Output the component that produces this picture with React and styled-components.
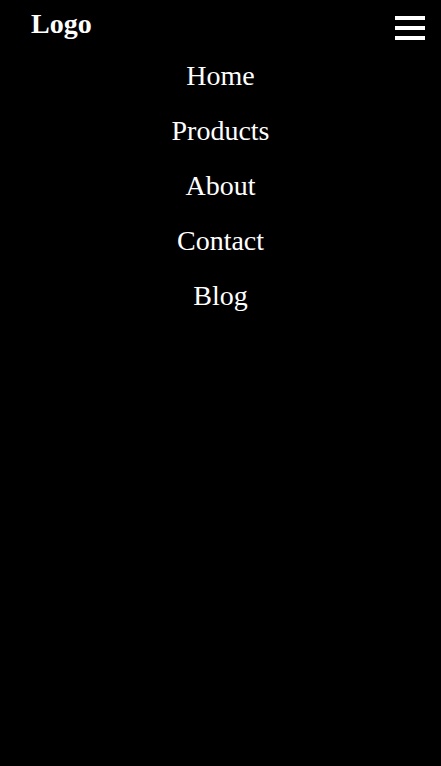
import styled, { createGlobalStyle } from 'styled-components'

const GlobalStyle = createGlobalStyle`
    html, body {
        margin: 0;
        padding: 0;
        background-color: #000;
    }

    body {
        font-family: "Liberation Serif", "Times New Roman", serif;
        color: #fff;
        min-height: 766px;
    }
`

const Page = styled.div`
    background-color: #000;
    min-height: 766px;
`

const HeaderWrap = styled.header`
    align-items: flex-start;
    display: flex;
    justify-content: space-between;
    padding: 8px 16px 0 31px;
`

const Logo = styled.div`
    font-size: 28px;
    font-weight: bold;
    line-height: 31px;
`

const Burger = styled.button`
    background: none;
    border: none;
    cursor: pointer;
    display: flex;
    flex-direction: column;
    gap: 6px;
    margin-top: 8px;
    padding: 0;
    width: 30px;
`

const Bar = styled.span`
    background-color: #fff;
    display: block;
    height: 4px;
    width: 100%;
`

const NavList = styled.nav`
    align-items: center;
    display: flex;
    flex-direction: column;
    margin-top: 8px;
`

const NavLink = styled.a`
    color: #fff;
    cursor: pointer;
    font-size: 28px;
    line-height: 55px;
    text-decoration: none;
`

const links = ['Home', 'Products', 'About', 'Contact', 'Blog']

export default function App() {
    return (
        <>
            <GlobalStyle />
            <Page>
                <HeaderWrap>
                    <Logo>Logo</Logo>
                    <Burger aria-label="Menu">
                        <Bar />
                        <Bar />
                        <Bar />
                    </Burger>
                </HeaderWrap>
                <NavList>
                    {links.map((text) => (
                        <NavLink key={text}>{text}</NavLink>
                    ))}
                </NavList>
            </Page>
        </>
    )
}
